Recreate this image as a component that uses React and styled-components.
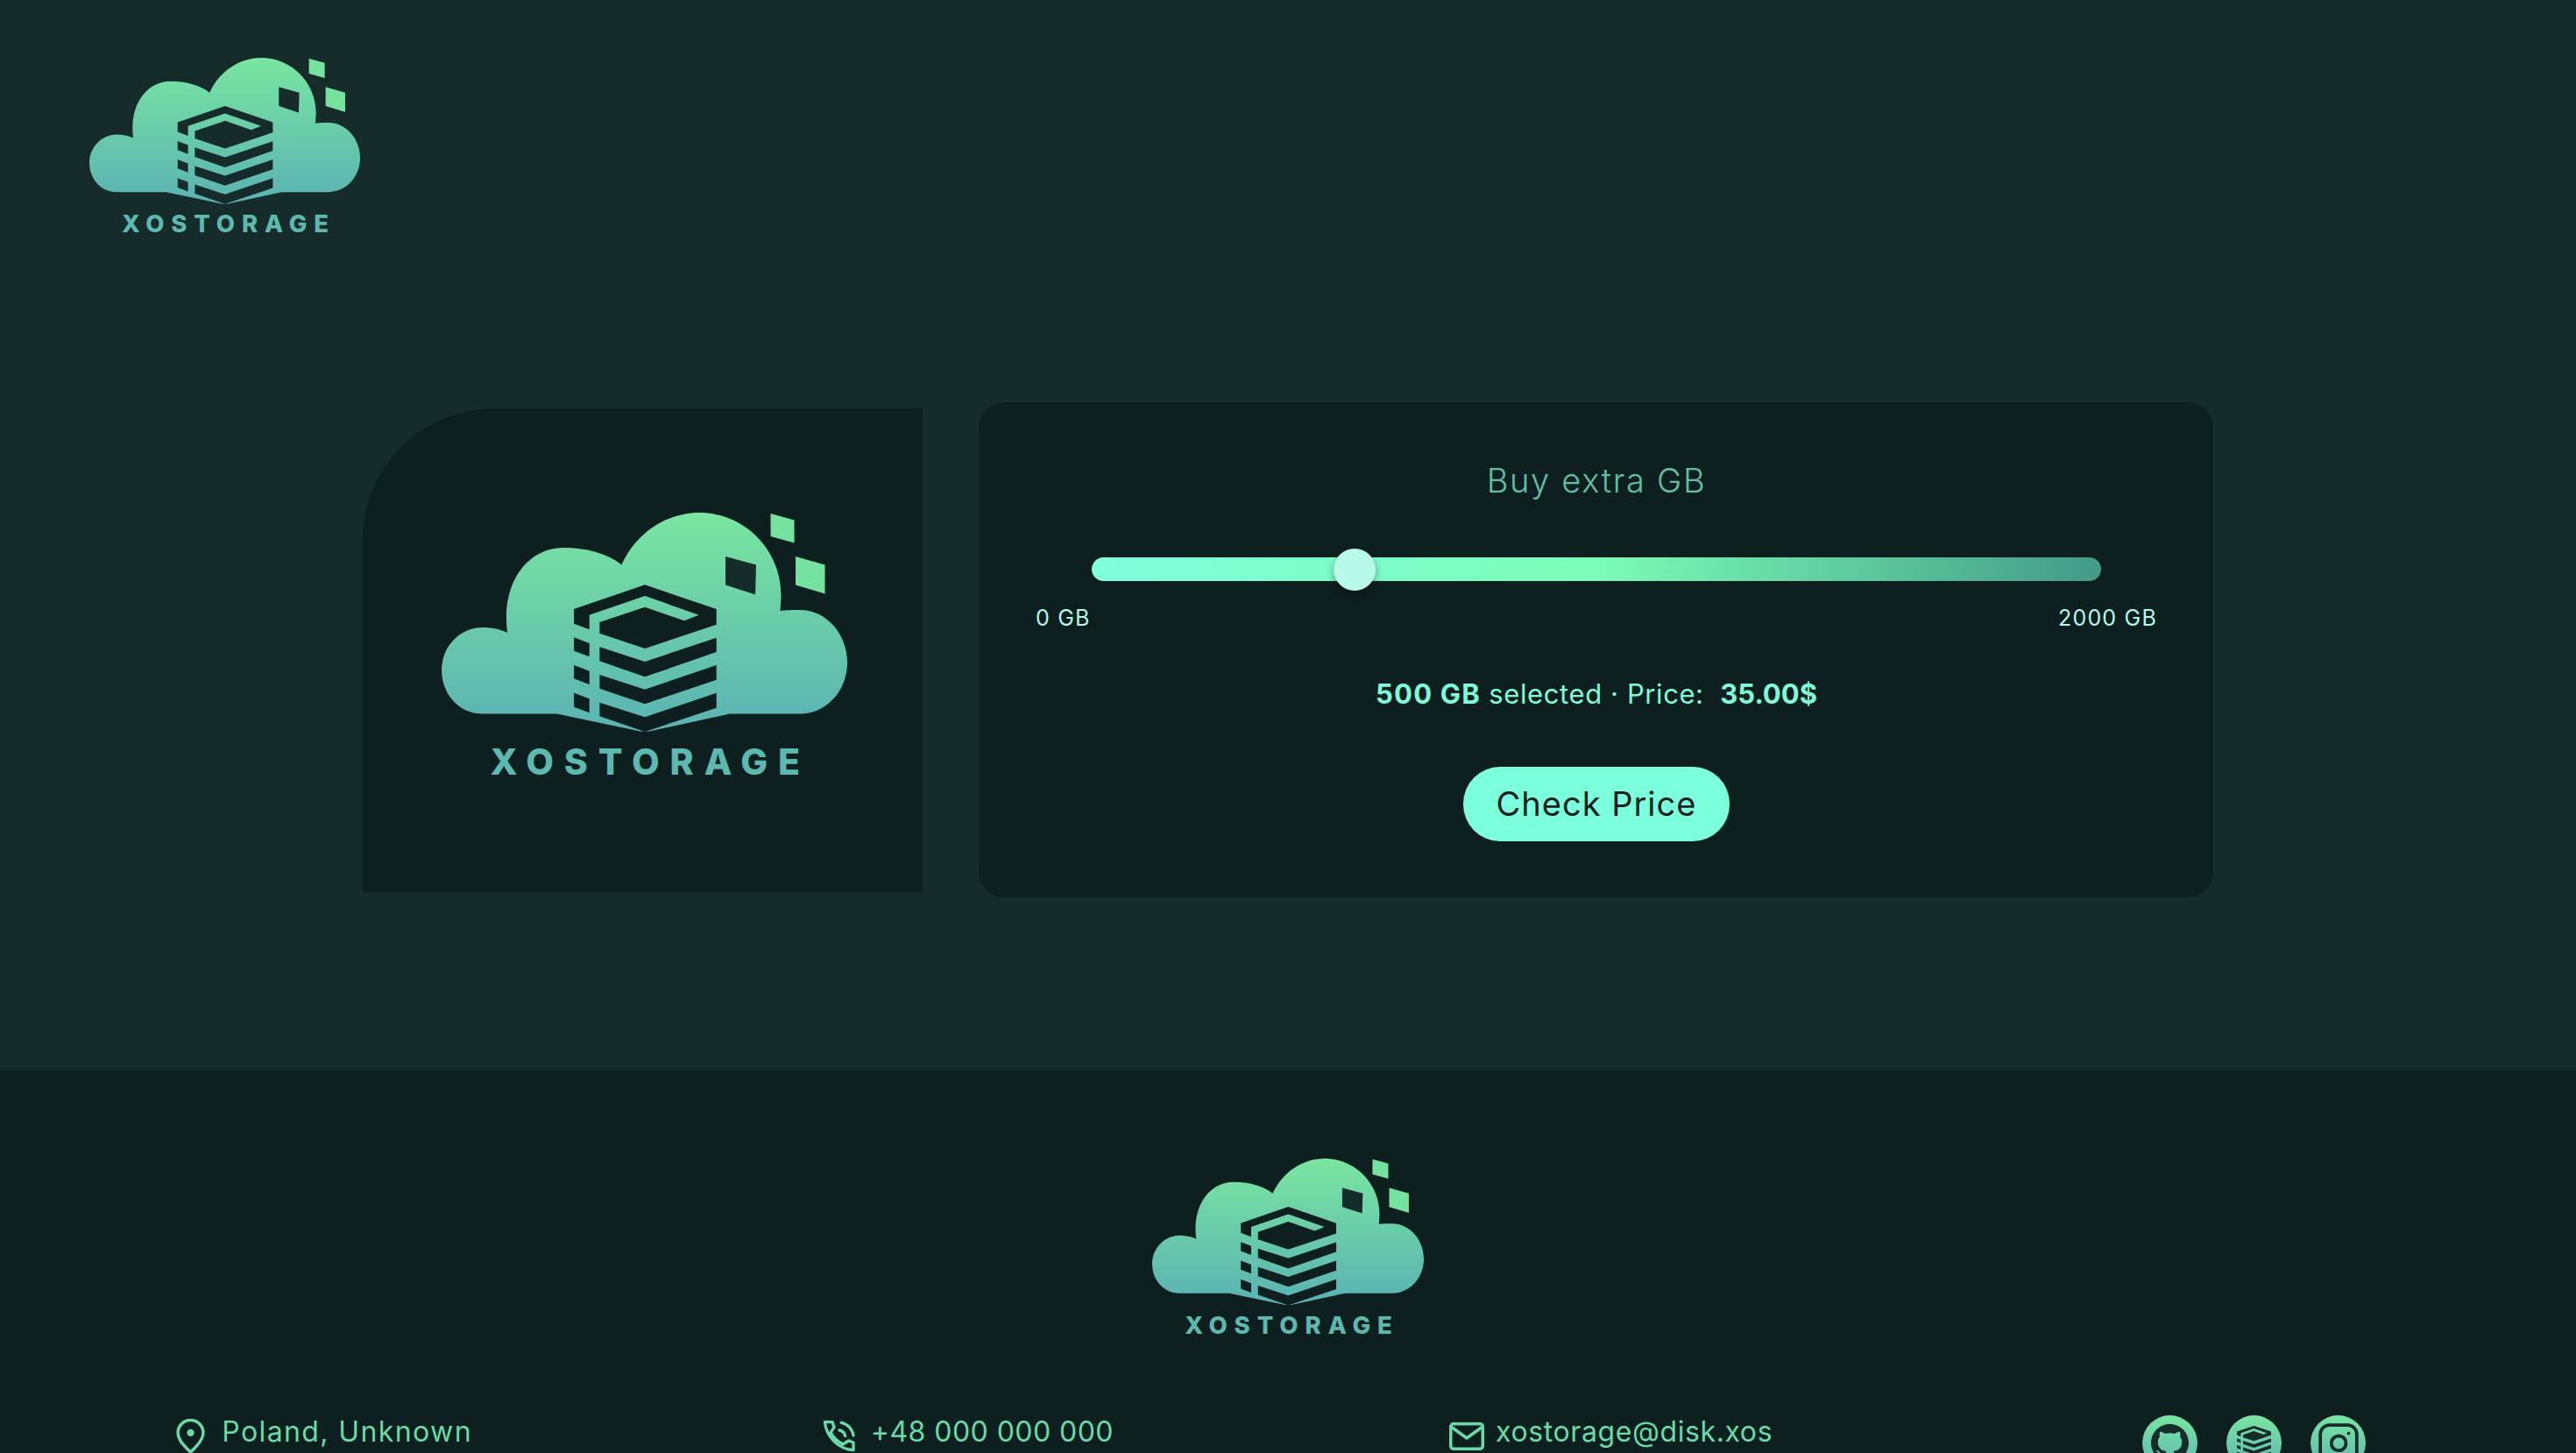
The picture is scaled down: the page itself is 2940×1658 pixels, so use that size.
import { useId, useState } from "react";
import styled, { createGlobalStyle } from "styled-components";
import { Instagram } from "lucide-react";

const GlobalStyle = createGlobalStyle`
  html { overflow: hidden; }
  body {
    margin: 0;
    background: #162c2b;
    font-family: "Inter", "Open Sans", sans-serif;
  }
`;

const Page = styled.div`
  display: flex;
  flex-direction: column;
  width: 100%;
`;

const Header = styled.header`
  height: 200px;
  padding: 66px 0 0 102px;
`;

const Main = styled.main`
  display: flex;
  justify-content: center;
  align-items: center;
  gap: 64px;
  padding: 193px 0 198px;
`;

const Hero = styled.div`
  width: 639px;
  height: 552px;
  box-sizing: border-box;
  padding: 119px 0 0 3px;
  display: flex;
  justify-content: center;
  align-items: flex-start;
  background: #0e1f1f;
  border-top-left-radius: 150px;
`;

const Panel = styled.section`
  width: 1409px;
  box-sizing: border-box;
  padding: 66px 64px 64px 65px;
  display: flex;
  flex-direction: column;
  align-items: center;
  background: #0e1f1f;
  border-radius: 30px;
`;

const Title = styled.h2`
  margin: 0;
  font-size: 38px;
  line-height: 46px;
  font-weight: 300;
  letter-spacing: 1.7px;
  color: #62bfa6;
`;

const Range = styled.input`
  -webkit-appearance: none;
  appearance: none;
  display: block;
  width: 1152px;
  height: 27px;
  margin: 65px 0 0;
  border-radius: 14px;
  background: linear-gradient(95deg, #7fffdb 0%, #7bfcb8 50%, #439a86 100%);
  outline: none;
  cursor: pointer;

  &::-webkit-slider-thumb {
    -webkit-appearance: none;
    width: 48px;
    height: 48px;
    border-radius: 50%;
    background: #b9f9ea;
    box-shadow: 0 4px 10px rgba(0, 0, 0, 0.35);
  }
`;

const Limits = styled.div`
  align-self: stretch;
  display: flex;
  justify-content: space-between;
  margin-top: 27px;
  font-size: 25px;
  line-height: 30px;
  letter-spacing: 1.2px;
  color: #b4f9e8;
`;

const Status = styled.p`
  margin: 52px 0 0;
  font-size: 31px;
  line-height: 40px;
  letter-spacing: 0.6px;
  color: #80f9d8;
  white-space: pre;
`;

const StatusValue = styled.strong`
  font-weight: 700;
  letter-spacing: ${({ $spacing }) => $spacing}px;
`;

const PriceButton = styled.button`
  width: 304px;
  height: 85px;
  margin-top: 63px;
  padding: 0 0 2px;
  border: none;
  border-radius: 42px;
  background: #7cffdb;
  color: #0e1f1f;
  font-family: inherit;
  font-size: 38px;
  letter-spacing: 1px;
  cursor: pointer;
`;

const Footer = styled.footer`
  display: flex;
  flex-direction: column;
  align-items: center;
  padding: 100px 0 40px;
  background: #0e1f1f;
`;

const ContactRow = styled.div`
  width: 100%;
  box-sizing: border-box;
  padding-left: 3px;
  display: grid;
  grid-template-columns: repeat(4, 1fr);
  justify-items: center;
  align-items: start;
  margin-top: 85px;
`;

const Contact = styled.a`
  display: flex;
  align-items: center;
  gap: ${({ $gap }) => $gap}px;
  height: 48px;
  color: #68dba9;
  text-decoration: none;
`;

const ContactText = styled.span`
  font-size: 32px;
  line-height: 40px;
  letter-spacing: ${({ $spacing }) => $spacing}px;
  margin-bottom: 10px;
`;

const Socials = styled.div`
  display: flex;
  gap: 33px;
`;

const SocialLink = styled.a`
  width: 63px;
  height: 63px;
  display: flex;
  align-items: center;
  justify-content: center;
  border-radius: 50%;
  background: linear-gradient(180deg, #79e6a0 0%, #5cb5b2 100%);
  color: #162c2b;
`;

const HOLE = "#162c2b";

// server stack, traced in its own 720x660 box
const SERVER_SHAPES = [
  "102,165 345,82 590,165 590,218 345,300 190,248 190,210 345,158 480,205 530,185 345,120 155,185 155,235 102,215",
  "190,295 345,345 590,263 590,312 345,397 190,343",
  "190,390 345,440 590,357 590,407 345,490 190,437",
  "190,485 345,535 590,452 590,503 345,585 190,532",
  "102,262 155,282 155,328 102,308",
  "102,357 155,377 155,423 102,403",
  "102,452 155,472 155,520 102,500",
];

const CLOUD =
  "M220 537C165 537 127 490 127 437C127 383 170 340 220 340C240 340 258 343 277 352C262 240 322 158 405 158C455 158 505 170 538 197C570 125 640 78 715 78C820 78 904 165 902 270L900 302C910 300 930 300 945 300C1005 300 1053 355 1053 420C1053 485 1005 537 945 537L785 537L601 577L580 577L390 537Z";

const ServerStack = ({ fill }) => (
  <>
    {SERVER_SHAPES.map((points) => (
      <polygon key={points} points={points} fill={fill} />
    ))}
  </>
);

const Logo = ({ width, ink }) => {
  const id = useId();
  return (
    <svg width={width} viewBox="127 78 926 622" style={{ display: "block" }}>
      <defs>
        <linearGradient id={id} gradientUnits="userSpaceOnUse" x1="0" y1="78" x2="0" y2="560">
          <stop offset="0" stopColor="#79e6a0" />
          <stop offset="1" stopColor="#5bb4b3" />
        </linearGradient>
      </defs>
      <path d={CLOUD} fill={`url(#${id})`} />
      <polygon points="775,178 845,197 843,265 775,243" fill={HOLE} />
      <polygon points="878,80 932,95 932,147 878,132" fill="#76e2a0" />
      <polygon points="935,178 1002,197 1002,263 935,243" fill="#76e2a0" />
      <g transform="translate(361 188) scale(0.6667)">
        <ServerStack fill={ink} />
      </g>
      <text
        x="238"
        y="675"
        textLength="707"
        lengthAdjust="spacing"
        fontFamily="Inter, sans-serif"
        fontWeight="800"
        fontSize="82"
        fill="#5db8af"
      >
        XOSTORAGE
      </text>
    </svg>
  );
};

const PinIcon = () => (
  <svg width="33" height="40" viewBox="0 0 24 29" fill="none" stroke="currentColor" strokeWidth="2.5" strokeLinejoin="round">
    <path d="M12 27.5C12 27.5 1.5 19 1.5 11.5A10.5 10.5 0 0 1 22.5 11.5C22.5 19 12 27.5 12 27.5Z" />
    <circle cx="12" cy="11.5" r="3" fill="currentColor" stroke="none" />
  </svg>
);

const PhoneIcon = () => (
  <svg width="40" height="40" viewBox="30 55 120 120" fill="none" stroke="currentColor" strokeWidth="10" strokeLinejoin="round" strokeLinecap="round">
    <path d="M40 66H66L72 84L60 102C68 118 88 134 102 142L122 130L138 136V162C90 160 46 120 40 66Z" />
    <path d="M96 68C118 72 134 90 138 112" />
    <path d="M90 94C100 96 108 104 110 114" />
  </svg>
);

const MailIcon = () => (
  <svg width="40" height="32" viewBox="0 0 40 32" fill="none" stroke="currentColor" strokeWidth="3.5">
    <rect x="1.75" y="1.75" width="36.5" height="28.5" rx="3" />
    <path d="M2 5L20 18L38 5" strokeLinejoin="round" />
  </svg>
);

const GithubMark = () => (
  <svg width="43" height="43" viewBox="0 0 16 16" fill="currentColor">
    <path d="M8 0C3.58 0 0 3.58 0 8c0 3.54 2.29 6.53 5.47 7.59.4.07.55-.17.55-.38 0-.19-.01-.82-.01-1.49-2.01.37-2.53-.49-2.69-.94-.09-.23-.48-.94-.82-1.13-.28-.15-.68-.52-.01-.53.63-.01 1.08.58 1.23.82.72 1.21 1.87.87 2.33.66.07-.52.28-.87.51-1.07-1.78-.2-3.64-.89-3.64-3.95 0-.87.31-1.59.82-2.15-.08-.2-.36-1.02.08-2.12 0 0 .67-.21 2.2.82.64-.18 1.32-.27 2-.27.68 0 1.36.09 2 .27 1.53-1.04 2.2-.82 2.2-.82.44 1.1.16 1.92.08 2.12.51.56.82 1.27.82 2.15 0 3.07-1.87 3.75-3.65 3.95.29.25.54.73.54 1.48 0 1.07-.01 1.93-.01 2.2 0 .21.15.46.55.38A8.013 8.013 0 0016 8c0-4.42-3.58-8-8-8z" />
  </svg>
);

const ServerMark = () => (
  <svg width="39" height="40" viewBox="102 82 488 503">
    <ServerStack fill="currentColor" />
  </svg>
);

const App = () => {
  const [gigabytes, setGigabytes] = useState(500);
  const price = (gigabytes * 0.07).toFixed(2);

  return (
    <Page>
      <GlobalStyle />
      <Header>
        <Logo width={309} ink={HOLE} />
      </Header>

      <Main>
        <Hero>
          <Logo width={463} ink="#0e1f1f" />
        </Hero>
        <Panel>
          <Title>Buy extra GB</Title>
          <Range
            type="range"
            min="0"
            max="2000"
            value={gigabytes}
            onChange={(e) => setGigabytes(Number(e.target.value))}
          />
          <Limits>
            <span>0 GB</span>
            <span>2000 GB</span>
          </Limits>
          <Status>
            <StatusValue $spacing={1.2}>{gigabytes} GB</StatusValue> selected · Price:  <StatusValue $spacing={0}>{price}$</StatusValue>
          </Status>
          <PriceButton>Check Price</PriceButton>
        </Panel>
      </Main>

      <Footer>
        <Logo width={310} ink="#0e1f1f" />
        <ContactRow>
          <Contact $gap={19}>
            <PinIcon />
            <ContactText $spacing={1.4}>Poland, Unknown</ContactText>
          </Contact>
          <Contact $gap={16}>
            <PhoneIcon />
            <ContactText $spacing={0.45}>+48 000 000 000</ContactText>
          </Contact>
          <Contact $gap={13}>
            <MailIcon />
            <ContactText $spacing={0.6}>xostorage@disk.xos</ContactText>
          </Contact>
          <Socials>
            <SocialLink>
              <GithubMark />
            </SocialLink>
            <SocialLink>
              <ServerMark />
            </SocialLink>
            <SocialLink>
              <Instagram size={50} strokeWidth={1.8} />
            </SocialLink>
          </Socials>
        </ContactRow>
      </Footer>
    </Page>
  );
};

export default App;
